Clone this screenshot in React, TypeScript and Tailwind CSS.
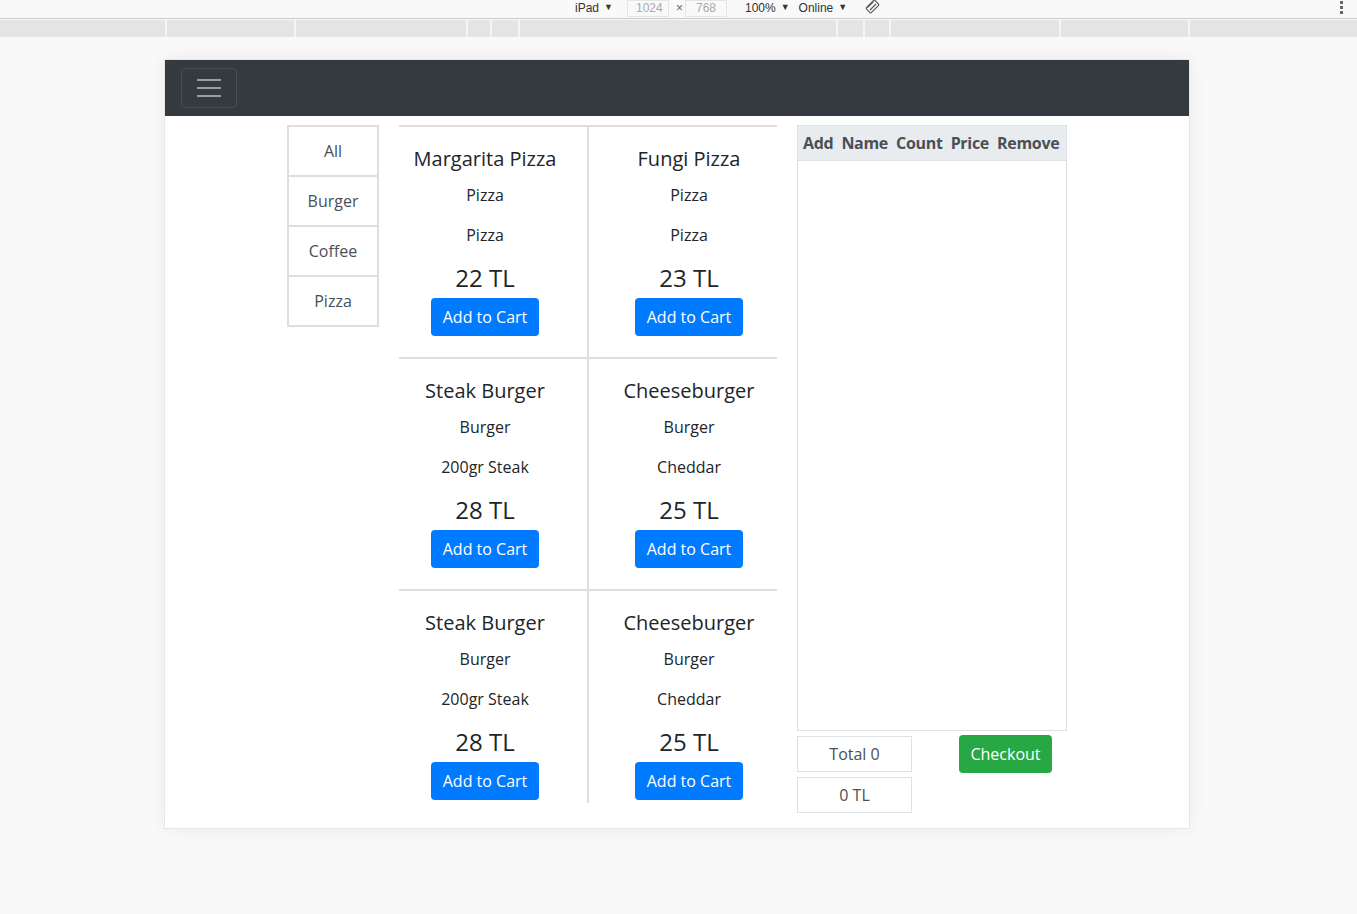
import React from "react";

const products = [
  { name: "Margarita Pizza", category: "Pizza", desc: "Pizza", price: 22 },
  { name: "Fungi Pizza", category: "Pizza", desc: "Pizza", price: 23 },
  { name: "Steak Burger", category: "Burger", desc: "200gr Steak", price: 28 },
  { name: "Cheeseburger", category: "Burger", desc: "Cheddar", price: 25 },
  { name: "Steak Burger", category: "Burger", desc: "200gr Steak", price: 28 },
  { name: "Cheeseburger", category: "Burger", desc: "Cheddar", price: 25 },
];

const categories = ["All", "Burger", "Coffee", "Pizza"];

// white gaps in the devtools ruler strip
const rulerStops = [165, 294, 466, 490, 518, 836, 863, 889, 1059, 1188];

function DevToolbar() {
  return (
    <div className="font-['Liberation_Sans',sans-serif]">
      <div className="flex h-[19px] items-center border-b border-[#cacaca] bg-[#f9f9f9] text-[12px] text-[#333]">
        <div className="ml-[575px] -mt-[2px] flex items-center">
          <span>iPad</span>
          <span className="ml-[5px] text-[9px]">▼</span>
          <span className="ml-[14px] flex h-[17px] w-[42px] items-center border border-[#e6e6e6] pl-[8px] text-[#aaa]">1024</span>
          <span className="ml-[7px] text-[#666]">×</span>
          <span className="ml-[2px] flex h-[17px] w-[42px] items-center border border-[#e6e6e6] pl-[10px] text-[#aaa]">768</span>
          <span className="ml-[18px]">100%</span>
          <span className="ml-[5px] text-[9px]">▼</span>
          <span className="ml-[9px]">Online</span>
          <span className="ml-[5px] text-[9px]">▼</span>
          <svg className="ml-[18px] -mt-[3px]" width="15" height="15" viewBox="0 0 15 15" fill="none" stroke="#555" strokeWidth="1.1">
            <rect x="4" y="1.5" width="7" height="12" rx="1.2" transform="rotate(45 7.5 7.5)" />
            <path d="M2.5 8.5 L8.5 2.5 M5 11 L11 5" />
          </svg>
        </div>
        <div className="ml-auto mr-[14px] flex -mt-[4px] flex-col gap-[2px]">
          <span className="h-[3px] w-[3px] bg-[#666]" />
          <span className="h-[3px] w-[3px] bg-[#666]" />
          <span className="h-[3px] w-[3px] bg-[#666]" />
        </div>
      </div>
      <div className="mt-[1px] flex h-[17px] bg-[#e4e4e4]">
        {rulerStops.map((x, i) => (
          <span
            key={x}
            className="h-full w-[2px] bg-[#f4f4f4]"
            style={{ marginLeft: i === 0 ? x : x - rulerStops[i - 1] - 2 }}
          />
        ))}
      </div>
    </div>
  );
}

function ProductCell({ p, index }: { p: (typeof products)[number]; index: number }) {
  const left = index % 2 === 0;
  const last = index >= 4;
  return (
    <div
      className={`flex flex-col items-center border-t-2 border-[#dedede] pt-[20px] text-center ${
        left ? "border-r-2 pr-[16px]" : "pl-[12px]"
      } ${last ? "pb-[3px]" : "pb-[21px]"}`}
    >
      <h5 className="mb-[12px] text-[20px] font-medium leading-[24px] text-[#212529]">{p.name}</h5>
      <p className="mb-[16px] text-[16px] leading-[24px] text-[#212529]">{p.category}</p>
      <p className="mb-[16px] text-[16px] leading-[24px] text-[#212529]">{p.desc}</p>
      <h4 className="mb-[6px] text-[24px] font-medium leading-[29px] text-[#212529]">{p.price} TL</h4>
      <button className="h-[38px] w-[108px] rounded-[4px] bg-[#007bff] text-[16px] text-white">Add to Cart</button>
    </div>
  );
}

export default function App() {
  return (
    <div className="min-h-screen bg-[#f9f9f9] font-['Open_Sans',sans-serif]">
      <DevToolbar />

      <div className="ml-[165px] mt-[23px] h-[768px] w-[1024px] bg-white shadow-[0_0_18px_rgba(0,0,0,0.07)] outline outline-[#e6e6e6]">
        {/* navbar */}
        <div className="flex h-[56px] items-center bg-[#343a40] px-[16px]">
          <button className="flex h-[40px] w-[56px] flex-col items-center justify-center gap-[6px] rounded-[4px] border border-white/10">
            <span className="h-[2px] w-[24px] bg-white/50" />
            <span className="h-[2px] w-[24px] bg-white/50" />
            <span className="h-[2px] w-[24px] bg-white/50" />
          </button>
        </div>

        <div className="flex items-start pl-[122px] pt-[9px]">
          {/* categories */}
          <div className="flex w-[92px] flex-col">
            {categories.map((c, i) => (
              <div
                key={c}
                className={`flex h-[52px] items-center justify-center border-2 border-[#dedede] text-[16px] text-[#495057] ${
                  i > 0 ? "-mt-[2px]" : ""
                }`}
              >
                {c}
              </div>
            ))}
          </div>

          {/* products */}
          <div className="ml-[20px] grid w-[378px] grid-cols-[190px_188px]">
            {products.map((p, i) => (
              <ProductCell key={i} p={p} index={i} />
            ))}
          </div>

          {/* cart */}
          <div className="ml-[20px] w-[270px]">
            <div className="flex h-[606px] flex-col border border-[#dee2e6]">
              <div className="flex h-[35px] items-center gap-[8px] border-b border-[#dee2e6] bg-[#e9ecef] pl-[5px] text-[16px] font-bold tracking-[-0.3px] text-[#495057]">
                <span>Add</span>
                <span>Name</span>
                <span>Count</span>
                <span>Price</span>
                <span>Remove</span>
              </div>
            </div>
            <div className="mt-[5px] flex items-start">
              <div className="flex flex-col gap-[5px]">
                <div className="flex h-[36px] w-[115px] items-center justify-center border border-[#dee2e6] text-[16px] text-[#495057]">Total 0</div>
                <div className="flex h-[36px] w-[115px] items-center justify-center border border-[#dee2e6] text-[16px] text-[#495057]">0 TL</div>
              </div>
              <button className="ml-[47px] -mt-[1px] h-[38px] w-[93px] rounded-[4px] bg-[#28a745] text-[16px] text-white">Checkout</button>
            </div>
          </div>
        </div>
      </div>
    </div>
  );
}
